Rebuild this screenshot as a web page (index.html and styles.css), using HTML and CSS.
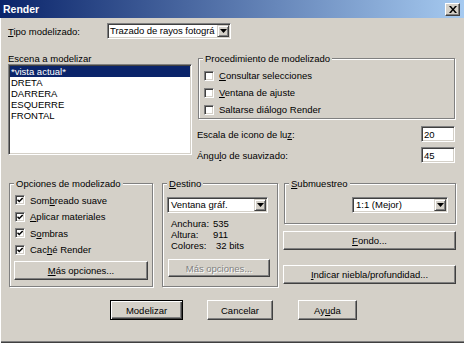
FILE: index.html
```html
<!DOCTYPE html>
<html>
<head>
<meta charset="utf-8">
<title>Render</title>
<link rel="stylesheet" href="styles.css">
</head>
<body>
<div class="window">
  <div class="titlebar">
    <span class="title">Render</span>
    <button class="close"><svg width="8" height="7" viewBox="0 0 8 7"><path d="M0 0h2l2 2.4L6 0h2L5 3.5 8 7H6L4 4.6 2 7H0l3-3.5z" fill="#000"/></svg></button>
  </div>
  <div class="content">
    <div class="row-type">
      <span class="type-label"><u>T</u>ipo modelizado:</span>
      <div class="combo combo-type"><span class="combo-text type-text">Trazado de rayos fotográ</span><span class="combo-btn"><svg width="7" height="4" viewBox="0 0 7 4"><path d="M0 0h7L3.5 4z" fill="#000"/></svg></span></div>
    </div>

    <div class="mid">
      <div class="scene">
        <div class="scene-label">Escena a modelizar</div>
        <div class="listbox">
          <div class="item selected">*vista actual*</div>
          <div class="item">DRETA</div>
          <div class="item">DARRERA</div>
          <div class="item">ESQUERRE</div>
          <div class="item">FRONTAL</div>
        </div>
      </div>
      <div class="proc">
        <div class="group group-proc">
          <div class="group-title">Procedimiento de modelizado</div>
          <div class="checks proc-checks">
            <div class="check-row"><span class="check"></span><span><u>C</u>onsultar selecciones</span></div>
            <div class="check-row"><span class="check"></span><span><u>V</u>entana de ajuste</span></div>
            <div class="check-row"><span class="check"></span><span>Saltarse diálogo Render</span></div>
          </div>
        </div>
        <div class="field-row first"><span>Escala de icono de lu<u>z</u>:</span><span class="edit">20</span></div>
        <div class="field-row"><span>Ángu<u>l</u>o de suavizado:</span><span class="edit">45</span></div>
      </div>
    </div>

    <div class="lower">
      <div class="group group-opts">
        <div class="group-title">Opciones de modelizado</div>
        <div class="checks opts-checks">
          <div class="check-row"><span class="check"><svg width="6" height="6" viewBox="0 0 7 7"><path d="M0.6 3.2l2 2 4-4" fill="none" stroke="#000" stroke-width="1.7"/></svg></span><span>Som<u>b</u>reado suave</span></div>
          <div class="check-row"><span class="check"><svg width="6" height="6" viewBox="0 0 7 7"><path d="M0.6 3.2l2 2 4-4" fill="none" stroke="#000" stroke-width="1.7"/></svg></span><span><u>A</u>plicar materiales</span></div>
          <div class="check-row"><span class="check"><svg width="6" height="6" viewBox="0 0 7 7"><path d="M0.6 3.2l2 2 4-4" fill="none" stroke="#000" stroke-width="1.7"/></svg></span><span>S<u>o</u>mbras</span></div>
          <div class="check-row"><span class="check"><svg width="6" height="6" viewBox="0 0 7 7"><path d="M0.6 3.2l2 2 4-4" fill="none" stroke="#000" stroke-width="1.7"/></svg></span><span>Cac<u>h</u>é Render</span></div>
        </div>
        <button class="btn opts-btn"><span><u>M</u>ás opciones...</span></button>
      </div>

      <div class="group group-dest">
        <div class="group-title"><u>D</u>estino</div>
        <div class="combo combo-dest"><span class="combo-text">Ventana gráf.</span><span class="combo-btn"><svg width="7" height="4" viewBox="0 0 7 4"><path d="M0 0h7L3.5 4z" fill="#000"/></svg></span></div>
        <div class="dest-info">
          <span>Anchura:</span><span>535</span>
          <span>Altura:</span><span>911</span>
          <span>Colores:</span><span class="bits">32 bits</span>
        </div>
        <button class="btn dest-btn" disabled>Más opciones...</button>
      </div>

      <div class="right-col">
        <div class="group group-sub">
          <div class="group-title"><u>S</u>ubmuestreo</div>
          <div class="sub-body">
            <div class="combo combo-sub"><span class="combo-text">1:1 (Mejor)</span><span class="combo-btn"><svg width="7" height="4" viewBox="0 0 7 4"><path d="M0 0h7L3.5 4z" fill="#000"/></svg></span></div>
          </div>
        </div>
        <button class="btn wide-btn fondo"><span><u>F</u>ondo...</span></button>
        <button class="btn wide-btn niebla"><span><u>I</u>ndicar niebla/profundidad...</span></button>
      </div>
    </div>

    <div class="actions">
      <button class="btn btn-default act-model">Modelizar</button>
      <button class="btn act-cancel">Cancelar</button>
      <button class="btn act-help">Ay<u>u</u>da</button>
    </div>
  </div>
</div>
</body>
</html>
```

FILE: styles.css
```css
* {
  box-sizing: border-box;
}

html,
body {
  margin: 0;
  padding: 0;
}

body {
  width: 464px;
  height: 343px;
  overflow: hidden;
  background: #d4d0c8;
  font-family: "Liberation Sans", Arial, sans-serif;
  font-size: 9.5px;
  line-height: 11px;
  color: #000;
}

u {
  text-decoration: underline;
  text-underline-offset: 1px;
}

button {
  font: inherit;
  color: inherit;
  padding: 0;
  margin: 0;
}

.window {
  width: 464px;
  height: 343px;
  background: #d4d0c8;
  box-shadow: inset 1px 0 #ffffff, inset 0 -1px #404040, inset 0 -2px #808080;
  display: flex;
  flex-direction: column;
}

/* Title bar */
.titlebar {
  height: 18px;
  flex: none;
  background: linear-gradient(to right, #0a246a, #a6caf0);
  display: flex;
  justify-content: space-between;
  align-items: flex-start;
  padding: 0 4px 0 3px;
}

.title {
  color: #fff;
  font-weight: bold;
  font-size: 10.5px;
  line-height: 18px;
}

.close {
  margin-top: 3px;
  width: 15px;
  height: 13px;
  background: #d4d0c8;
  border: 1px solid;
  border-color: #ffffff #404040 #404040 #ffffff;
  box-shadow: inset -1px -1px #808080;
  display: flex;
  align-items: center;
  justify-content: center;
}

.close svg {
  display: block;
}

/* Content */
.content {
  padding: 0 8px;
}

.row-type {
  display: flex;
  align-items: center;
  height: 16px;
  margin-top: 5px;
}

.type-label {
  width: 99px;
}

/* Sunken controls */
.combo,
.listbox,
.edit,
.check {
  background: #fff;
  border: 1px solid;
  border-color: #808080 #ffffff #ffffff #808080;
  box-shadow: inset 1px 1px #404040, inset -1px -1px #d4d0c8;
}

.combo {
  display: flex;
  height: 16px;
  padding: 1px;
}

.combo-type {
  width: 124px;
}

.combo-text {
  flex: 1;
  min-width: 0;
  overflow: hidden;
  white-space: nowrap;
  line-height: 12px;
  padding-left: 2px;
}

.type-text {
  padding-left: 1px;
  letter-spacing: -0.05px;
}

.combo-btn {
  flex: none;
  width: 12px;
  height: 12px;
  background: #d4d0c8;
  border: 1px solid;
  border-color: #d4d0c8 #404040 #404040 #d4d0c8;
  box-shadow: inset 1px 1px #ffffff, inset -1px -1px #808080;
  display: flex;
  align-items: center;
  justify-content: center;
}

.combo-btn svg {
  display: block;
}

/* Middle section */
.mid {
  display: flex;
  gap: 6px;
  margin-top: 14px;
}

.scene {
  width: 184px;
}

.listbox {
  height: 91px;
  padding: 1px;
}

.item {
  height: 11px;
  line-height: 11px;
  padding-left: 1px;
  white-space: nowrap;
}

.item.selected {
  background: #0a246a;
  color: #fff;
}

.proc {
  width: 258px;
  padding-top: 5px;
}

/* Group boxes */
.group {
  border: 1px solid #808080;
  box-shadow: inset 1px 1px #ffffff, 1px 1px #ffffff;
}

.group-title {
  width: fit-content;
  margin: -6px 0 0 4px;
  padding: 0 2px;
  background: #d4d0c8;
  line-height: 11px;
  white-space: nowrap;
}

.group-proc {
  width: 257px;
}

.check-row {
  display: flex;
  align-items: center;
  gap: 5px;
  white-space: nowrap;
}

.check {
  flex: none;
  width: 10px;
  height: 10px;
  display: flex;
  align-items: center;
  justify-content: center;
}

.check svg {
  display: block;
}

.proc-checks {
  padding: 3px 0 0 5px;
}

.proc-checks .check-row {
  height: 17px;
}

.field-row {
  display: flex;
  justify-content: space-between;
  align-items: center;
  height: 16px;
  margin: 5px 1px 0 -1px;
}

.field-row.first {
  margin-top: 7px;
}

.edit {
  width: 34px;
  height: 16px;
  padding: 2px 2px 0 2px;
  line-height: 12px;
}

/* Lower section */
.lower {
  display: flex;
  margin-top: 20px;
}

.group-opts {
  width: 144px;
  margin-left: 1px;
  padding-bottom: 6px;
}

.opts-checks {
  padding: 3px 0 0 5px;
}

.opts-checks .check-row {
  height: 16.5px;
}

/* Buttons */
.btn {
  background: #d4d0c8;
  border: 1px solid;
  border-color: #ffffff #404040 #404040 #ffffff;
  box-shadow: inset -1px -1px #808080;
  display: flex;
  align-items: center;
  justify-content: center;
  white-space: nowrap;
}

.btn-default {
  border-color: #000;
  box-shadow: inset 1px 1px #ffffff, inset -1px -1px #404040, inset -2px -2px #808080;
}

.btn:disabled {
  color: #808080;
  text-shadow: 1px 1px 0 #ffffff;
}

.opts-btn {
  width: 134px;
  height: 19px;
  margin: 3px 0 0 4px;
}

.group-dest {
  width: 116px;
  margin-left: 9px;
}

.combo-dest {
  width: 101px;
  margin: 8px 0 0 4px;
}

.dest-info {
  display: grid;
  grid-template-columns: 42px auto;
  margin: 5px 0 0 8px;
  line-height: 11px;
}

.bits {
  padding-left: 3px;
}

.dest-btn {
  width: 102px;
  height: 18px;
  margin: 8px 0 0 5px;
}

.right-col {
  width: 172px;
  margin-left: 6px;
  display: flex;
  flex-direction: column;
}

.group-sub {
  width: 172px;
}

.sub-body {
  display: flex;
  justify-content: flex-end;
  padding: 8px 7px 10px 0;
}

.combo-sub {
  width: 96px;
}

.wide-btn {
  width: 173px;
  height: 19px;
  margin-left: -1px;
}

.fondo {
  margin-top: 7px;
}

.niebla {
  margin-top: 15px;
}

/* Dialog actions */
.actions {
  display: flex;
  margin-top: 13px;
  padding-left: 102px;
}

.actions .btn {
  height: 20px;
}

.act-model {
  width: 73px;
}

.act-cancel {
  width: 66px;
  margin-left: 24px;
}

.act-help {
  width: 59px;
  margin-left: 25px;
}
```
